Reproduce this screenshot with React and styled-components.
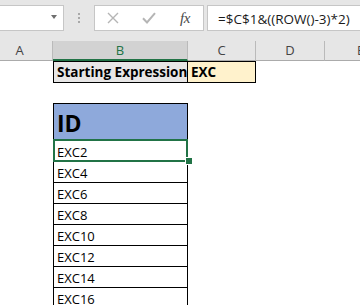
import React from "react";
import styled, { createGlobalStyle, css } from "styled-components";

const Global = createGlobalStyle`
  html, body { margin: 0; padding: 0; background: #fff; }
  body { font-family: "Open Sans", "Noto Sans", sans-serif; }
`;

const COLS = "53px 135px 68px 69px 72px";
const GREEN = "#217346";

const Page = styled.div`
  width: 360px;
  height: 305px;
  overflow: hidden;
  background: #fff;
`;

const FormulaBar = styled.div`
  box-sizing: border-box;
  height: 41px;
  padding-top: 5px;
  display: flex;
  align-items: flex-start;
  background: #e6e6e6;
`;

const NameBox = styled.div`
  box-sizing: border-box;
  width: 65px;
  height: 26px;
  margin-left: -1px;
  background: #fff;
  border: 1px solid #c6c6c6;
  display: flex;
  justify-content: flex-end;
  align-items: flex-start;
  padding: 9px 6px 0 0;
`;

const Caret = styled.span`
  width: 0;
  height: 0;
  border-left: 3.5px solid transparent;
  border-right: 3.5px solid transparent;
  border-top: 4px solid #6e6e6e;
`;

const Grip = styled.div`
  margin: 8px 14px 0 14px;
  display: flex;
  flex-direction: column;
  gap: 2px;
`;

const Dot = styled.span`
  width: 2px;
  height: 2px;
  background: #a8a8a8;
`;

const FxTools = styled.div`
  box-sizing: border-box;
  width: 110px;
  height: 26px;
  background: #fff;
  border: 1px solid #c6c6c6;
  display: grid;
  grid-template-columns: repeat(3, 36px);
  align-items: center;
  justify-items: center;
`;

const FxLabel = styled.span`
  font-family: "Liberation Serif", "DejaVu Serif", serif;
  font-style: italic;
  font-size: 15px;
  line-height: 15px;
  color: #4a4a4a;
  letter-spacing: -0.5px;
`;

const FormulaInput = styled.div`
  box-sizing: border-box;
  flex: 1;
  height: 26px;
  margin-left: 3px;
  margin-right: -1px;
  background: #fff;
  border: 1px solid #c6c6c6;
  padding: 2px 0 0 10px;
  font-size: 13.5px;
  line-height: 22px;
  color: #1a1a1a;
  white-space: nowrap;
`;

const HeaderRow = styled.div`
  display: grid;
  grid-template-columns: ${COLS};
  height: 20px;
  background: #e6e6e6;
`;

const ColHeader = styled.div`
  box-sizing: border-box;
  border-right: 1px solid #bababa;
  border-bottom: 1px solid #ababab;
  text-align: center;
  font-size: 13px;
  line-height: 19px;
  color: #444;
  padding-right: ${(p) => p.$offset || 0}px;
  ${(p) =>
    p.$selected &&
    css`
      background: #d2d2d2;
      color: ${GREEN};
      border-bottom: 2px solid ${GREEN};
      line-height: 18px;
    `}
`;

const Sheet = styled.div`
  display: flex;
  flex-direction: column;
  background: #fff;
`;

const Row = styled.div`
  display: grid;
  grid-template-columns: ${COLS};
  height: ${(p) => p.$h}px;
  flex: none;
`;

const Cell = styled.div`
  box-sizing: border-box;
  min-width: 0;
  display: flex;
  align-items: flex-end;
  padding: 0 3px ${(p) => (p.$pb != null ? p.$pb : 1)}px;
  font-size: ${(p) => p.$size || 13}px;
  line-height: 15px;
  color: #000;
  white-space: nowrap;
  background: ${(p) => p.$bg || "transparent"};
  font-weight: ${(p) => (p.$bold ? 700 : 400)};
  ${(p) =>
    p.$box &&
    css`
      border-right: 1px solid #000;
      border-bottom: 1px solid #000;
    `}
  ${(p) => p.$left && "border-left: 1px solid #000;"}
  ${(p) => p.$top && "border-top: 1px solid #000;"}
  ${(p) =>
    p.$big &&
    css`
      font-size: 23px;
      line-height: 30px;
    `}
  ${(p) =>
    p.$selected &&
    css`
      position: relative;
      z-index: 2;
      &::after {
        content: "";
        position: absolute;
        left: -1px;
        right: -1px;
        top: -2px;
        bottom: -1px;
        border: 2px solid ${GREEN};
        pointer-events: none;
      }
      &::before {
        content: "";
        position: absolute;
        box-sizing: border-box;
        width: 8px;
        height: 8px;
        right: -6px;
        bottom: -4px;
        background: ${GREEN};
        border: 1px solid #fff;
        z-index: 3;
      }
    `}
`;

const CrossIcon = () => (
  <svg width="12" height="12" viewBox="0 0 12 12">
    <path d="M1 1 L11 11 M11 1 L1 11" stroke="#b5b5b5" strokeWidth="1.4" fill="none" />
  </svg>
);

const CheckIcon = () => (
  <svg width="14" height="12" viewBox="0 0 14 12">
    <path d="M1 6.2 L5 10.5 L13 1.2" stroke="#b5b5b5" strokeWidth="2" fill="none" />
  </svg>
);

const ids = [2, 4, 6, 8, 10, 12, 14, 16];

export default function App() {
  return (
    <Page>
      <Global />
      <FormulaBar>
        <NameBox>
          <Caret />
        </NameBox>
        <Grip>
          <Dot />
          <Dot />
          <Dot />
        </Grip>
        <FxTools>
          <CrossIcon />
          <CheckIcon />
          <FxLabel>fx</FxLabel>
        </FxTools>
        <FormulaInput>=$C$1&amp;((ROW()-3)*2)</FormulaInput>
      </FormulaBar>

      <HeaderRow>
        <ColHeader $offset={13}>A</ColHeader>
        <ColHeader $selected>B</ColHeader>
        <ColHeader>C</ColHeader>
        <ColHeader>D</ColHeader>
        <ColHeader>E</ColHeader>
      </HeaderRow>

      <Sheet>
        <Row $h={22}>
          <Cell />
          <Cell $box $left $top $bold $size={13.5} $bg="#e7e6e6" $pb={2}>
            Starting Expression
          </Cell>
          <Cell $box $top $bold $size={13.5} $bg="#fff2cc" $pb={2}>
            EXC
          </Cell>
          <Cell />
          <Cell />
        </Row>
        <Row $h={20}>
          <Cell />
          <Cell />
          <Cell />
          <Cell />
          <Cell />
        </Row>
        <Row $h={38}>
          <Cell />
          <Cell $box $left $top $bold $big $bg="#8ea9db" $pb={2}>
            ID
          </Cell>
          <Cell />
          <Cell />
          <Cell />
        </Row>
        {ids.map((n, i) => (
          <Row $h={21} key={n}>
            <Cell />
            <Cell $box $left $selected={i === 0}>
              EXC{n}
            </Cell>
            <Cell />
            <Cell />
            <Cell />
          </Row>
        ))}
      </Sheet>
    </Page>
  );
}
